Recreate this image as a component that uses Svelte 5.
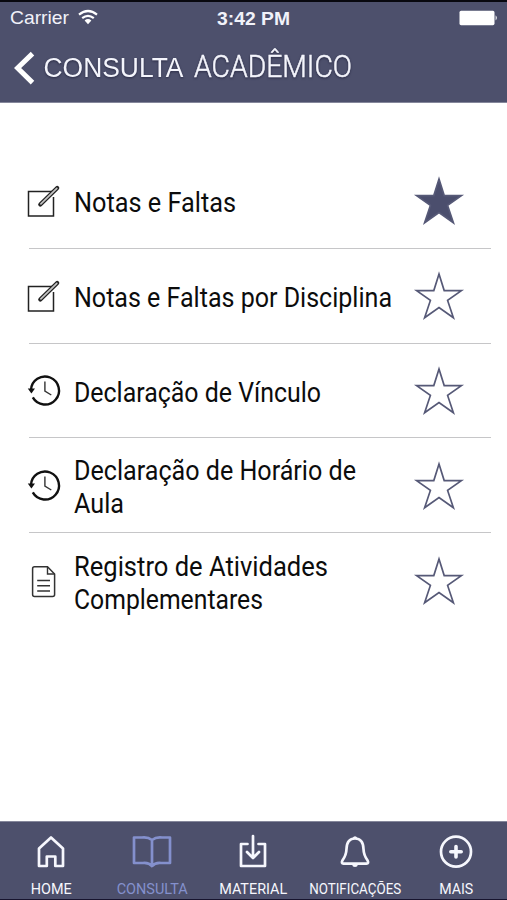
<script lang="ts">
  type Line = { text: string; width: number };
  type Item = { icon: string; lines: Line[]; favorite?: boolean };

  let items: Item[] = $state([
    { icon: "edit", lines: [{ text: "Notas e Faltas", width: 162 }], favorite: true },
    { icon: "edit", lines: [{ text: "Notas e Faltas por Disciplina", width: 318 }] },
    { icon: "history", lines: [{ text: "Declaração de Vínculo", width: 247 }] },
    {
      icon: "history",
      lines: [
        { text: "Declaração de Horário de", width: 282 },
        { text: "Aula", width: 50 },
      ],
    },
    {
      icon: "document",
      lines: [
        { text: "Registro de Atividades", width: 254 },
        { text: "Complementares", width: 189 },
      ],
    },
  ]);

  const tabs = [
    { icon: "home", label: "HOME", width: 41 },
    { icon: "book", label: "CONSULTA", width: 71 },
    { icon: "download", label: "MATERIAL", width: 68 },
    { icon: "bell", label: "NOTIFICAÇÕES", width: 92 },
    { icon: "plus", label: "MAIS", width: 34 },
  ];

  let active = $state("book");
</script>

<div class="app">
  <header>
    <div class="status">
      <div class="carrier">
        <svg width="59" height="22">
          <text x="0" y="17" textLength="59" lengthAdjust="spacingAndGlyphs">Carrier</text>
        </svg>
        <svg class="wifi" width="20" height="15" viewBox="0 0 20 15">
          <path d="M1 4.6Q10-2.6 19 4.6M4.2 8.2Q10 3.4 15.8 8.2" fill="none" stroke="#fff" stroke-width="2.2" />
          <path d="M6.6 10.5Q10 7.6 13.4 10.5L10 14.2Z" fill="#fff" />
        </svg>
      </div>
      <svg class="time" width="74" height="22">
        <text x="0" y="17.5" textLength="73" lengthAdjust="spacingAndGlyphs">3:42 PM</text>
      </svg>
      <svg class="battery" width="39" height="16" viewBox="0 0 39 16">
        <rect x="0.5" y="0.8" width="35" height="14.4" rx="1.6" fill="#fff" />
        <path d="M36.6 5.2Q39 7.8 36.6 10.4Z" fill="#fff" />
      </svg>
    </div>
    <div class="title">
      <button class="back" aria-label="Voltar">
        <svg width="22" height="34" viewBox="0 0 22 34">
          <path d="M19.5 2.6L4.6 17L19.5 31.6" fill="none" stroke="#fff" stroke-width="5" />
        </svg>
      </button>
      <svg class="heading" width="320" height="48">
        <text class="section" x="0.5" y="35" textLength="140" lengthAdjust="spacingAndGlyphs">CONSULTA</text>
        <text class="page" x="151" y="34.6" textLength="158" lengthAdjust="spacingAndGlyphs">ACADÊMICO</text>
      </svg>
    </div>
  </header>

  <main>
    {#each items as item}
      <div class="row">
        <div class="icon">
          {#if item.icon === "edit"}
            <svg width="34" height="34" viewBox="0 0 34 34">
              <path d="M25 6.6H1.5V31H26.5V12" fill="none" stroke="#222" stroke-width="1.5" />
              <path d="M13.3 19.5L30.2 3" stroke="#222" stroke-width="4.2" stroke-linecap="round" />
              <path d="M13.9 18.9L29.8 3.4" stroke="#c4c4c4" stroke-width="1.7" stroke-linecap="round" />
            </svg>
          {:else if item.icon === "history"}
            <svg width="34" height="34" viewBox="0 0 34 34">
              <path d="M4 16A14 14 0 1 1 5.8 23.4" fill="none" stroke="#111" stroke-width="2.4" />
              <path d="M0.8 14.5H8L4.4 19.5Z" fill="#111" />
              <path d="M17.9 7.5V17.2L24.3 21" fill="none" stroke="#333" stroke-width="1.4" />
            </svg>
          {:else}
            <svg width="34" height="34" viewBox="0 0 34 34">
              <path
                d="M7.5 1.8H20.5L27.6 9V29.5Q27.6 31.5 25.6 31.5H7.5Q5.6 31.5 5.6 29.5V3.8Q5.6 1.8 7.5 1.8Z"
                fill="none"
                stroke="#333"
                stroke-width="1.5"
              />
              <path d="M20.5 2V9H27.5" fill="none" stroke="#333" stroke-width="1.4" />
              <path d="M10.2 15.5H23M10.2 20.8H23M10.2 26H23" stroke="#333" stroke-width="1.4" />
            </svg>
          {/if}
        </div>
        <svg class="label" width="340" height="94">
          {#each item.lines as line, i}
            <text
              x="0"
              y={(item.lines.length === 1 ? 58.4 : 42.2) + i * 33}
              textLength={line.width}
              lengthAdjust="spacingAndGlyphs">{line.text}</text>
          {/each}
        </svg>
        <button
          class="star"
          class:on={item.favorite}
          aria-label="Favorito"
          onclick={() => (item.favorite = !item.favorite)}
        >
          <svg width="50" height="50" viewBox="0 0 50 50">
            <path d="M25 3L30.2 19.6H47.4L33.6 29.4L39.4 46.8L25 36.6L10.6 46.8L16.4 29.4L2.6 19.6H19.8Z" />
          </svg>
        </button>
      </div>
    {/each}
  </main>

  <nav>
    {#each tabs as tab}
      <button class="tab" class:active={active === tab.icon} onclick={() => (active = tab.icon)}>
        <svg class="glyph" width="40" height="34" viewBox="0 0 40 34">
          {#if tab.icon === "home"}
            <path d="M8 13.5L20 2.5L32 13.5V31H24.3V21.5H15.8V31H8Z" />
          {:else if tab.icon === "book"}
            <path d="M20 5Q16 1.8 10 2.5H2V28H11Q17 27.5 20 31Q23 27.5 29 28H38V2.5H30Q24 1.8 20 5ZM20 5V30" />
          {:else if tab.icon === "download"}
            <path d="M14.5 9H8V31H32V9H25.5M20 1V22M14 17L20 23L26 17" />
          {:else if tab.icon === "bell"}
            <path d="M20 3.5C14 3.5 11.7 8 11.5 14C11.3 20 10 22 7.4 25.5Q6 28.6 8.5 28.6H31.5Q34 28.6 32.6 25.5C30 22 28.7 20 28.5 14C28.3 8 26 3.5 20 3.5Z" />
            <path class="solid" d="M17.3 3.5Q20-1.2 22.7 3.5ZM17 29.5H23Q22.5 32 20 32Q17.5 32 17 29.5Z" />
          {:else}
            <circle cx="20" cy="16.7" r="15" />
            <path class="cross" d="M20 11.5V21.9M14.8 16.7H25.2" />
          {/if}
        </svg>
        <svg width="100" height="22">
          <text
            x={50.2 - tab.width / 2}
            y="14.5"
            textLength={tab.width}
            lengthAdjust="spacingAndGlyphs">{tab.label}</text>
        </svg>
      </button>
    {/each}
  </nav>
</div>

<style>
  :global(body) {
    margin: 0;
    background: #fff;
  }

  .app {
    display: flex;
    flex-direction: column;
    box-sizing: border-box;
    width: 507px;
    height: 900px;
    border-top: 2px solid #08080f;
    border-bottom: 1px solid #17142e;
    overflow: hidden;
    font-family: Roboto, "Noto Sans", sans-serif;
  }

  svg {
    display: block;
    flex: none;
    overflow: visible;
  }

  button {
    display: block;
    padding: 0;
    border: none;
    background: none;
    font: inherit;
  }

  header {
    flex: none;
    box-sizing: border-box;
    height: 101px;
    border-bottom: 1px solid #85879b;
    background: #4d506c;
  }

  .status {
    display: grid;
    grid-template-columns: 1fr auto 1fr;
    align-items: center;
    height: 32px;
    padding: 0 10px;
    font-family: "Liberation Sans", sans-serif;
    font-size: 18.5px;
  }

  .status text {
    fill: #f1f2fa;
  }

  .time text {
    font-weight: bold;
  }

  .carrier {
    display: flex;
    align-items: center;
    gap: 9px;
  }

  .wifi {
    margin-top: -2px;
  }

  .battery {
    justify-self: end;
    margin-right: -1px;
  }

  .title {
    display: flex;
    align-items: center;
    height: 48px;
    padding: 8px 0 0 13px;
  }

  .back {
    margin: 4px 8px 0 0;
  }

  .heading text {
    fill: #f4f5fc;
    filter: drop-shadow(0 1px 1px rgba(20, 20, 45, 0.6));
  }

  .section {
    font-family: "Liberation Sans", sans-serif;
    font-size: 27px;
  }

  .page {
    font-size: 32px;
    font-weight: 300;
    stroke: #f4f5fc;
    stroke-width: 0.5;
  }

  main {
    flex: 1;
    padding: 51px 16px 0 29px;
  }

  .row {
    display: flex;
    align-items: center;
    box-sizing: border-box;
    height: 94.8px;
    border-bottom: 1px solid #c6c6c8;
  }

  .row:last-child {
    border-bottom: none;
  }

  .icon {
    width: 45px;
    margin: 2px 0 0 -2px;
  }

  .label {
    margin: 0 auto 0 2px;
    font-size: 27px;
    fill: #0c0c0c;
  }

  .star {
    margin: 1px 27px 0 0;
  }

  .star path {
    fill: none;
    stroke: #565977;
    stroke-width: 1.7;
  }

  .star.on path {
    fill: #4b4e6d;
  }

  nav {
    display: grid;
    grid-template-columns: repeat(5, 1fr);
    flex: none;
    box-sizing: border-box;
    height: 78px;
    border-top: 1px solid #85879b;
    background: #4d506c;
  }

  .tab {
    display: flex;
    flex-direction: column;
    align-items: center;
    padding-top: 13px;
    gap: 10px;
    color: #f6f7fd;
    font-size: 15.5px;
  }

  .tab text {
    fill: currentColor;
  }

  .tab.active {
    color: #8490cd;
  }

  .glyph {
    fill: none;
    stroke: currentColor;
    stroke-width: 2.7;
    stroke-linejoin: round;
    stroke-linecap: round;
  }

  .solid {
    fill: currentColor;
    stroke: none;
  }

  .cross {
    stroke-width: 3.6;
  }
</style>
